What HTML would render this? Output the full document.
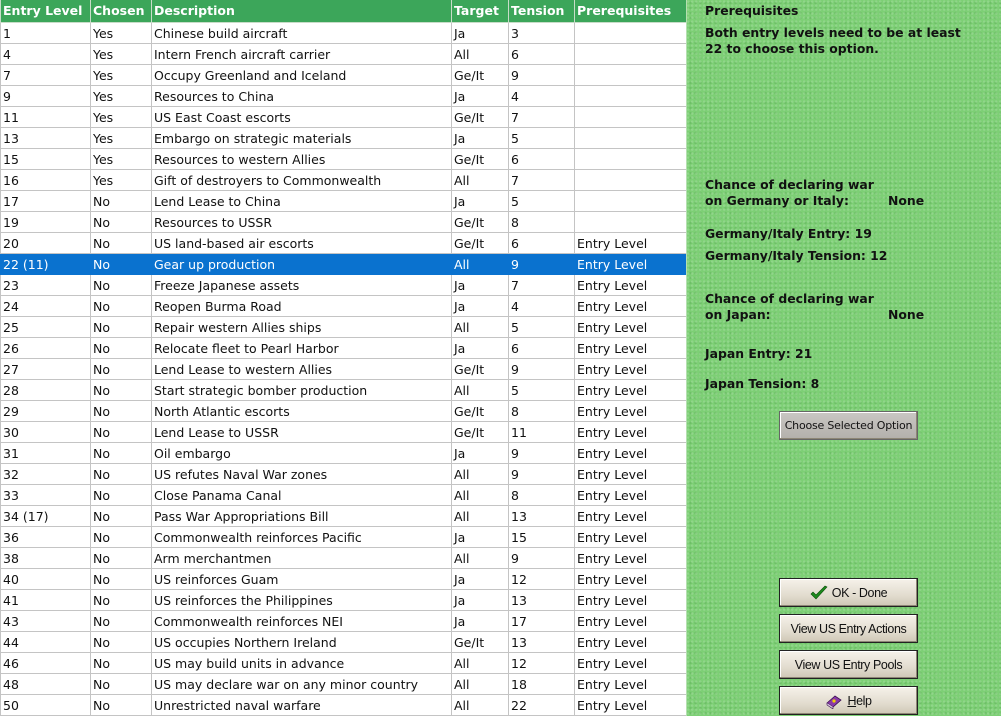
<!DOCTYPE html>
<html><head><meta charset="utf-8"><style>
*{margin:0;padding:0;box-sizing:border-box}
body{width:1001px;height:716px;overflow:hidden;background:#fff;font-family:"DejaVu Sans","Liberation Sans",sans-serif;position:relative}
table{position:absolute;left:0;top:0;border-collapse:collapse;width:686px;table-layout:fixed;font-size:12.5px;color:#111}
td,th{height:21px;padding:1px 0 0 2px;border:1px solid #c4c4c4;white-space:nowrap;overflow:hidden;text-align:left;vertical-align:middle}
th{height:22px;padding-top:0;background:#3ca65a;color:#fff;font-weight:bold;font-size:12.5px;border:1px solid #c8dcc8;border-top:none}
tr.sel td{background:#0a72cf;color:#fff;border-color:#0a72cf}
#panel{position:absolute;left:686px;top:0;width:315px;height:716px;background:#7dcf75;
background-image:radial-gradient(circle at 30% 40%,rgba(255,255,255,.15) 1px,transparent 1.5px),radial-gradient(circle at 70% 60%,rgba(0,80,0,.12) 1px,transparent 1.5px);background-size:4px 4px,5px 5px;border-left:1px solid #b5e0b0}
.t{position:absolute;left:18px;font-weight:bold;font-size:12.4px;color:#111;line-height:16px;white-space:nowrap}
.btn{position:absolute;left:92px;width:139px;height:29px;border:1px solid #222;background:linear-gradient(#f6f2ea,#e2dccf 60%,#cfc7b6);font-family:"Liberation Sans",sans-serif;font-size:12.5px;letter-spacing:-0.4px;color:#111;display:flex;align-items:center;justify-content:center;white-space:nowrap;box-shadow:inset -1px -1px 0 #8d8675,inset 1px 1px 0 #fff}
</style></head><body>
<table>
<colgroup><col style="width:90px"><col style="width:61px"><col style="width:300px"><col style="width:57px"><col style="width:66px"><col style="width:112px"></colgroup>
<tr><th>Entry Level</th><th>Chosen</th><th>Description</th><th>Target</th><th>Tension</th><th>Prerequisites</th></tr>
<tr><td>1</td><td>Yes</td><td>Chinese build aircraft</td><td>Ja</td><td>3</td><td></td></tr>
<tr><td>4</td><td>Yes</td><td>Intern French aircraft carrier</td><td>All</td><td>6</td><td></td></tr>
<tr><td>7</td><td>Yes</td><td>Occupy Greenland and Iceland</td><td>Ge/It</td><td>9</td><td></td></tr>
<tr><td>9</td><td>Yes</td><td>Resources to China</td><td>Ja</td><td>4</td><td></td></tr>
<tr><td>11</td><td>Yes</td><td>US East Coast escorts</td><td>Ge/It</td><td>7</td><td></td></tr>
<tr><td>13</td><td>Yes</td><td>Embargo on strategic materials</td><td>Ja</td><td>5</td><td></td></tr>
<tr><td>15</td><td>Yes</td><td>Resources to western Allies</td><td>Ge/It</td><td>6</td><td></td></tr>
<tr><td>16</td><td>Yes</td><td>Gift of destroyers to Commonwealth</td><td>All</td><td>7</td><td></td></tr>
<tr><td>17</td><td>No</td><td>Lend Lease to China</td><td>Ja</td><td>5</td><td></td></tr>
<tr><td>19</td><td>No</td><td>Resources to USSR</td><td>Ge/It</td><td>8</td><td></td></tr>
<tr><td>20</td><td>No</td><td>US land-based air escorts</td><td>Ge/It</td><td>6</td><td>Entry Level</td></tr>
<tr class="sel"><td>22 (11)</td><td>No</td><td>Gear up production</td><td>All</td><td>9</td><td>Entry Level</td></tr>
<tr><td>23</td><td>No</td><td>Freeze Japanese assets</td><td>Ja</td><td>7</td><td>Entry Level</td></tr>
<tr><td>24</td><td>No</td><td>Reopen Burma Road</td><td>Ja</td><td>4</td><td>Entry Level</td></tr>
<tr><td>25</td><td>No</td><td>Repair western Allies ships</td><td>All</td><td>5</td><td>Entry Level</td></tr>
<tr><td>26</td><td>No</td><td>Relocate fleet to Pearl Harbor</td><td>Ja</td><td>6</td><td>Entry Level</td></tr>
<tr><td>27</td><td>No</td><td>Lend Lease to western Allies</td><td>Ge/It</td><td>9</td><td>Entry Level</td></tr>
<tr><td>28</td><td>No</td><td>Start strategic bomber production</td><td>All</td><td>5</td><td>Entry Level</td></tr>
<tr><td>29</td><td>No</td><td>North Atlantic escorts</td><td>Ge/It</td><td>8</td><td>Entry Level</td></tr>
<tr><td>30</td><td>No</td><td>Lend Lease to USSR</td><td>Ge/It</td><td>11</td><td>Entry Level</td></tr>
<tr><td>31</td><td>No</td><td>Oil embargo</td><td>Ja</td><td>9</td><td>Entry Level</td></tr>
<tr><td>32</td><td>No</td><td>US refutes Naval War zones</td><td>All</td><td>9</td><td>Entry Level</td></tr>
<tr><td>33</td><td>No</td><td>Close Panama Canal</td><td>All</td><td>8</td><td>Entry Level</td></tr>
<tr><td>34 (17)</td><td>No</td><td>Pass War Appropriations Bill</td><td>All</td><td>13</td><td>Entry Level</td></tr>
<tr><td>36</td><td>No</td><td>Commonwealth reinforces Pacific</td><td>Ja</td><td>15</td><td>Entry Level</td></tr>
<tr><td>38</td><td>No</td><td>Arm merchantmen</td><td>All</td><td>9</td><td>Entry Level</td></tr>
<tr><td>40</td><td>No</td><td>US reinforces Guam</td><td>Ja</td><td>12</td><td>Entry Level</td></tr>
<tr><td>41</td><td>No</td><td>US reinforces the Philippines</td><td>Ja</td><td>13</td><td>Entry Level</td></tr>
<tr><td>43</td><td>No</td><td>Commonwealth reinforces NEI</td><td>Ja</td><td>17</td><td>Entry Level</td></tr>
<tr><td>44</td><td>No</td><td>US occupies Northern Ireland</td><td>Ge/It</td><td>13</td><td>Entry Level</td></tr>
<tr><td>46</td><td>No</td><td>US may build units in advance</td><td>All</td><td>12</td><td>Entry Level</td></tr>
<tr><td>48</td><td>No</td><td>US may declare war on any minor country</td><td>All</td><td>18</td><td>Entry Level</td></tr>
<tr><td>50</td><td>No</td><td>Unrestricted naval warfare</td><td>All</td><td>22</td><td>Entry Level</td></tr>
</table>
<div id="panel">
<div class="t" style="top:3px">Prerequisites</div>
<div class="t" style="top:25px">Both entry levels need to be at least<br>22 to choose this option.</div>
<div class="t" style="top:177px">Chance of declaring war<br>on Germany or Italy:<span style="position:absolute;left:183px">None</span></div>
<div class="t" style="top:226px">Germany/Italy Entry: 19</div>
<div class="t" style="top:248px">Germany/Italy Tension: 12</div>
<div class="t" style="top:291px">Chance of declaring war<br>on Japan:<span style="position:absolute;left:183px">None</span></div>
<div class="t" style="top:346px">Japan Entry: 21</div>
<div class="t" style="top:376px">Japan Tension: 8</div>
<div class="btn" style="top:411px;background:linear-gradient(#c9c7c3,#b3b0ab);border-color:#666;font-family:'DejaVu Sans',sans-serif;font-size:11px;letter-spacing:-0.2px">Choose Selected Option</div>
<div class="btn" style="top:578px"><svg width="18" height="16" viewBox="0 0 18 16" style="margin-right:4px"><path d="M1 9 L6 14 L17 2 L15 1 L6 10 L3 7 Z" fill="#1d8a1d" stroke="#0b4e0b" stroke-width=".6"/></svg>OK - Done</div>
<div class="btn" style="top:614px">View US Entry Actions</div>
<div class="btn" style="top:650px">View US Entry Pools</div>
<div class="btn" style="top:686px"><svg width="18" height="16" viewBox="0 0 18 16" style="margin-right:4px"><path d="M2 10 L10 3 L16 7 L8 14 Z" fill="#8a3aa8" stroke="#3a1050" stroke-width=".8"/><path d="M2 10 L2 12 L8 16 L8 14" fill="#d8c8e0" stroke="#3a1050" stroke-width=".6"/><circle cx="9" cy="8" r="1.6" fill="#f0d000"/></svg><span><u>H</u>elp</span></div>
</div>
</body></html>
